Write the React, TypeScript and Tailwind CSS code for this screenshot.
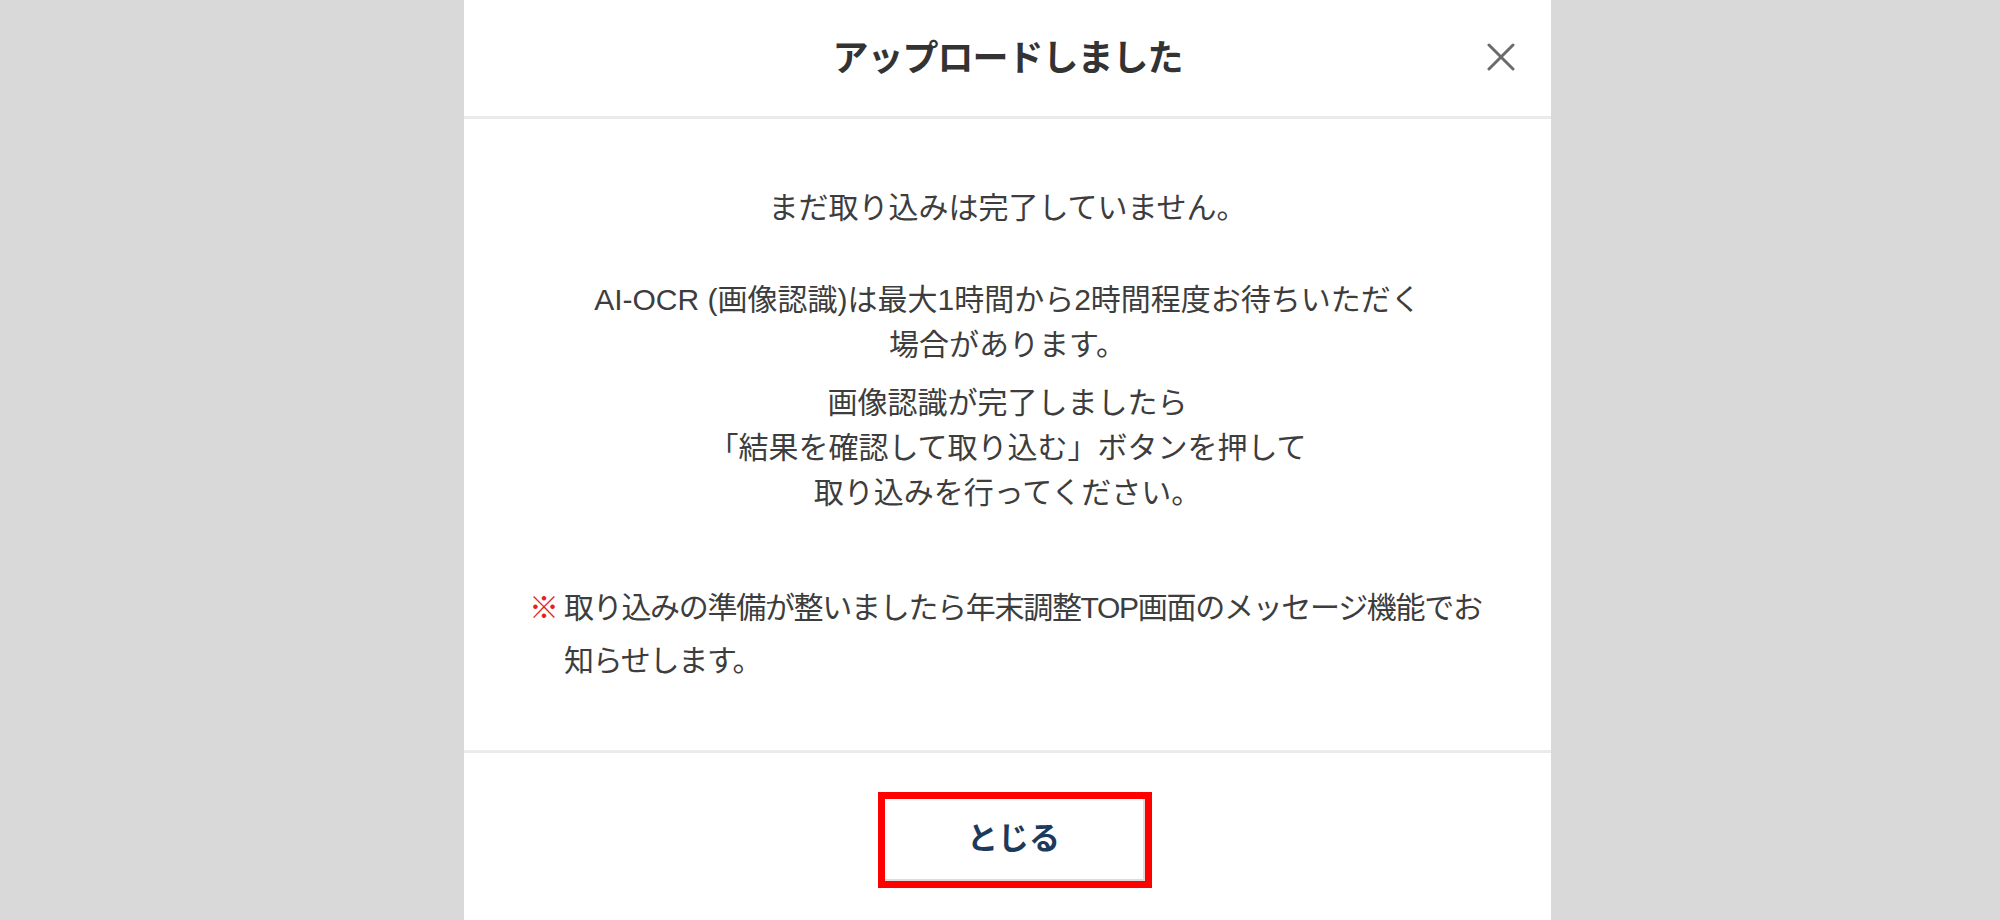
const font = {
  fontFamily: '"Liberation Sans", "Noto Sans CJK JP", sans-serif',
};

function CloseIcon() {
  return (
    <svg width="28" height="28" viewBox="0 0 28 28" fill="none">
      <path
        d="M2 2 L26 26 M26 2 L2 26"
        stroke="#6b6b6b"
        strokeWidth="3"
        strokeLinecap="round"
      />
    </svg>
  );
}

export default function App() {
  return (
    <div className="h-[920px] w-full overflow-hidden bg-[#d9d9d9]" style={font}>
      <div className="ml-[464px] w-[1087px] bg-white min-h-[920px]">
        {/* header */}
        <div className="relative flex h-[119px] items-center justify-center border-b-[3px] border-[#ebebeb] pt-[2px]">
          <h2 className="text-[36px] font-bold tracking-[-1px] text-[#333333]">
            アップロードしました
          </h2>
          <button className="absolute right-[36px] top-[43px]">
            <CloseIcon />
          </button>
        </div>

        {/* body */}
        <div className="px-[65px] pt-[66px] pb-[63px] text-[30px] leading-[45px] text-[#3d3d3d]">
          <p className="text-center">まだ取り込みは完了していません。</p>
          <p className="mt-[47px] text-center">
            AI-OCR (画像認識)は最大1時間から2時間程度お待ちいただく
            <br />
            場合があります。
          </p>
          <p className="mt-[13px] text-center">
            画像認識が完了しましたら
            <br />
            「結果を確認して取り込む」ボタンを押して
            <br />
            取り込みを行ってください。
          </p>
          <div className="mt-[66px] flex leading-[53px] tracking-[-1.3px]">
            <span className="w-[35px] shrink-0 text-[#e8201c]">※</span>
            <p>
              <span className="whitespace-nowrap">
                取り込みの準備が整いましたら年末調整TOP画面のメッセージ機能でお
              </span>
              <br />
              知らせします。
            </p>
          </div>
        </div>

        {/* footer */}
        <div className="flex justify-center border-t-[3px] border-[#ebebeb] pt-[39px] pl-[14px]">
          <div className="border-[7px] border-[#ff0000]">
            <button className="flex h-[82px] w-[260px] items-center justify-center border-r-2 border-b-2 border-[#dcdcdc] bg-white text-[31px] font-bold text-[#1c3a5b]">
              とじる
            </button>
          </div>
        </div>
      </div>
    </div>
  );
}
